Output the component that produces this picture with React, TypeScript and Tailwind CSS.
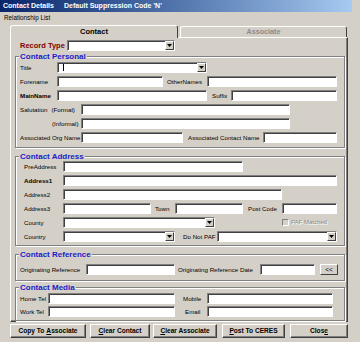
import React from 'react';

function Box({ className = '', children }: { className?: string; children?: React.ReactNode }) {
  return (
    <div
      className={`h-[11px] shrink-0 flex items-center justify-end bg-white border border-t-[#808080] border-l-[#808080] border-b-white border-r-white shadow-[inset_1px_1px_0_#404040] ${className}`}
    >
      {children}
    </div>
  );
}

function Arrow() {
  return (
    <div className="w-[9px] h-[9px] flex items-center justify-center bg-[#d4d0c8] border border-t-white border-l-white border-b-[#404040] border-r-[#404040]">
      <svg width="5" height="3" viewBox="0 0 5 3">
        <path d="M0 0H5L2.5 3z" fill="#000" />
      </svg>
    </div>
  );
}

function Combo({ className = '', children }: { className?: string; children?: React.ReactNode }) {
  return (
    <Box className={className}>
      {children}
      <Arrow />
    </Box>
  );
}

function Label({ className = '', children }: { className?: string; children: React.ReactNode }) {
  return <span className={`shrink-0 whitespace-nowrap text-[6.2px] leading-[11px] text-black ${className}`}>{children}</span>;
}

function Group({ title, className = '', children }: { title: string; className?: string; children: React.ReactNode }) {
  return (
    <fieldset
      className={`ml-[4px] w-[330px] px-[1px] border border-[#808080] shadow-[inset_1px_1px_0_#fff,1px_1px_0_#fff] ${className}`}
    >
      <legend className="ml-[2px] px-[1px] bg-[#d4d0c8] text-[8px] leading-[9px] font-bold text-[#1c1cc8]">{title}</legend>
      {children}
    </fieldset>
  );
}

function Btn({ className = '', children }: { className?: string; children: React.ReactNode }) {
  return (
    <div
      className={`h-[14px] shrink-0 flex items-center justify-center bg-[#d4d0c8] border border-t-white border-l-white border-b-[#404040] border-r-[#404040] shadow-[inset_-1px_-1px_0_#808080] text-[6.6px] font-bold text-black ${className}`}
    >
      {children}
    </div>
  );
}

export default function App() {
  return (
    <div className="w-[360px] h-[342px] overflow-hidden bg-[#d4d0c8] font-['Liberation_Sans',Arial,sans-serif] select-none">
      <div className="w-[352px] h-[12px] flex items-center bg-gradient-to-r from-[#0a246a] to-[#a6caf0] text-white text-[7px] font-bold">
        <span className="ml-[3px] w-[61px]">Contact Details</span>
        <span>Default Suppression Code 'N'</span>
      </div>
      <div className="h-[13px] pl-[4px] text-[6.3px] leading-[12px] text-black">Relationship List</div>

      <div className="h-[12px] flex items-end">
        <div className="relative z-10 ml-[10px] mb-[-1px] w-[168px] h-[13px] flex items-center justify-center rounded-t-[3px] bg-[#d4d0c8] border-t border-l border-r border-t-white border-l-white border-r-[#404040] text-[7.5px] font-bold text-black">
          Contact
        </div>
        <div className="ml-[2px] w-[167px] h-[11px] flex items-center justify-center rounded-t-[3px] bg-[#d4d0c8] border-t border-l border-r border-t-white border-l-white border-r-[#404040] text-[7.2px] font-bold text-[#8a8a8a]">
          Associate
        </div>
      </div>

      <div className="ml-[10px] w-[338px] h-[285px] pt-[2px] border border-t-white border-l-white border-b-[#404040] border-r-[#404040] shadow-[inset_-1px_-1px_0_#808080]">
        <div className="flex items-center h-[11px]">
          <span className="shrink-0 w-[56px] pl-[9px] text-[7.5px] leading-[11px] font-bold text-[#800000] whitespace-nowrap">Record Type</span>
          <Combo className="w-[108px]" />
        </div>

        <Group title="Contact Personal" className="mt-[1px] pt-[1px] pb-[4px]">
          <div className="flex flex-col gap-[3px]">
            <div className="flex items-center">
              <Label className="w-[40px] pl-[3px]">Title</Label>
              <Combo className="w-[150px]">
                <div className="mr-auto ml-[5px] w-[1px] h-[7px] bg-black" />
              </Combo>
            </div>
            <div className="flex items-center">
              <Label className="w-[40px] pl-[3px]">Forename</Label>
              <Box className="w-[106px]" />
              <Label className="w-[44px] pl-[4px]">OtherNames</Label>
              <Box className="w-[130px]" />
            </div>
            <div className="flex items-center">
              <Label className="w-[40px] pl-[3px] font-bold">MainName</Label>
              <Box className="w-[150px]" />
              <Label className="w-[24px] pl-[5px]">Suffix</Label>
              <Box className="w-[106px]" />
            </div>
            <div className="flex items-center">
              <Label className="w-[64px] pl-[3px]">
                Salutation<span className="ml-[4px]">(Formal)</span>
              </Label>
              <Box className="w-[209px]" />
            </div>
            <div className="flex items-center">
              <Label className="w-[64px] pl-[35px]">(Informal)</Label>
              <Box className="w-[209px]" />
            </div>
            <div className="flex items-center">
              <Label className="w-[64px] pl-[3px]">Associated Org Name</Label>
              <Box className="w-[102px]" />
              <Label className="w-[80px] pl-[5px]">Associated Contact Name</Label>
              <Box className="w-[74px]" />
            </div>
          </div>
        </Group>

        <Group title="Contact Address" className="mt-[4px] pb-[3px]">
          <div className="flex flex-col gap-[3px]">
            <div className="flex items-center">
              <Label className="w-[46px] pl-[7px]">PreAddress</Label>
              <Box className="w-[180px]" />
            </div>
            <div className="flex items-center">
              <Label className="w-[46px] pl-[7px] font-bold">Address1</Label>
              <Box className="w-[274px]" />
            </div>
            <div className="flex items-center">
              <Label className="w-[46px] pl-[7px]">Address2</Label>
              <Box className="w-[219px]" />
            </div>
            <div className="flex items-center">
              <Label className="w-[46px] pl-[7px]">Address3</Label>
              <Box className="w-[88px]" />
              <Label className="w-[24px] pl-[4px]">Town</Label>
              <Box className="w-[68px]" />
              <Label className="w-[39px] pl-[5px]">Post Code</Label>
              <Box className="w-[55px]" />
            </div>
            <div className="flex items-center">
              <Label className="w-[46px] pl-[7px]">County</Label>
              <Combo className="w-[152px]" />
              <div className="ml-[67px] flex items-center">
                <div className="w-[7px] h-[7px] border border-t-[#808080] border-l-[#808080] border-b-white border-r-white bg-[#d4d0c8]" />
                <span className="ml-[2px] text-[6px] leading-[11px] text-[#8a8a8a] [text-shadow:1px_1px_0_#fff] whitespace-nowrap">PAF Matched</span>
              </div>
            </div>
            <div className="flex items-center">
              <Label className="w-[46px] pl-[7px]">Country</Label>
              <Combo className="w-[112px]" />
              <Label className="w-[42px] pl-[8px]">Do Not PAF</Label>
              <Combo className="w-[120px]" />
            </div>
          </div>
        </Group>

        <Group title="Contact Reference" className="mt-[4px] pt-[5px] pb-[5px]">
          <div className="flex items-center">
            <Label className="w-[69px] pl-[3px]">Originating Reference</Label>
            <Box className="w-[89px]" />
            <Label className="w-[85px] pl-[3px]">Originating Reference Date</Label>
            <Box className="w-[55px]" />
            <div className="ml-[5px] w-[18px] h-[11px] flex items-center justify-center bg-[#d4d0c8] border border-t-white border-l-white border-b-[#404040] border-r-[#404040] text-[6.5px] text-black">
              &lt;&lt;
            </div>
          </div>
        </Group>

        <Group title="Contact Media" className="mt-[2px] pt-[1px] pb-[3px]">
          <div className="flex flex-col gap-[2px]">
            <div className="flex items-center">
              <Label className="w-[31px] pl-[3px]">Home Tel</Label>
              <Box className="w-[127px]" />
              <Label className="w-[32px] pl-[8px]">Mobile</Label>
              <Box className="w-[126px]" />
            </div>
            <div className="flex items-center">
              <Label className="w-[31px] pl-[3px]">Work Tel</Label>
              <Box className="w-[127px]" />
              <Label className="w-[32px] pl-[10px]">Email</Label>
              <Box className="w-[126px]" />
            </div>
          </div>
        </Group>
      </div>

      <div className="mt-[2px] flex items-center">
        <Btn className="ml-[10px] w-[76px]">
          Copy To <span className="underline ml-[2px]">A</span>ssociate
        </Btn>
        <Btn className="ml-[4px] w-[60px]">
          <span className="underline">C</span>lear Contact
        </Btn>
        <Btn className="ml-[3px] w-[64px]">
          <span className="underline">C</span>lear Associate
        </Btn>
        <Btn className="ml-[5px] w-[63px]">
          <span className="underline">P</span>ost To CERES
        </Btn>
        <Btn className="ml-[5px] w-[58px]">
          Clos<span className="underline">e</span>
        </Btn>
      </div>
    </div>
  );
}
